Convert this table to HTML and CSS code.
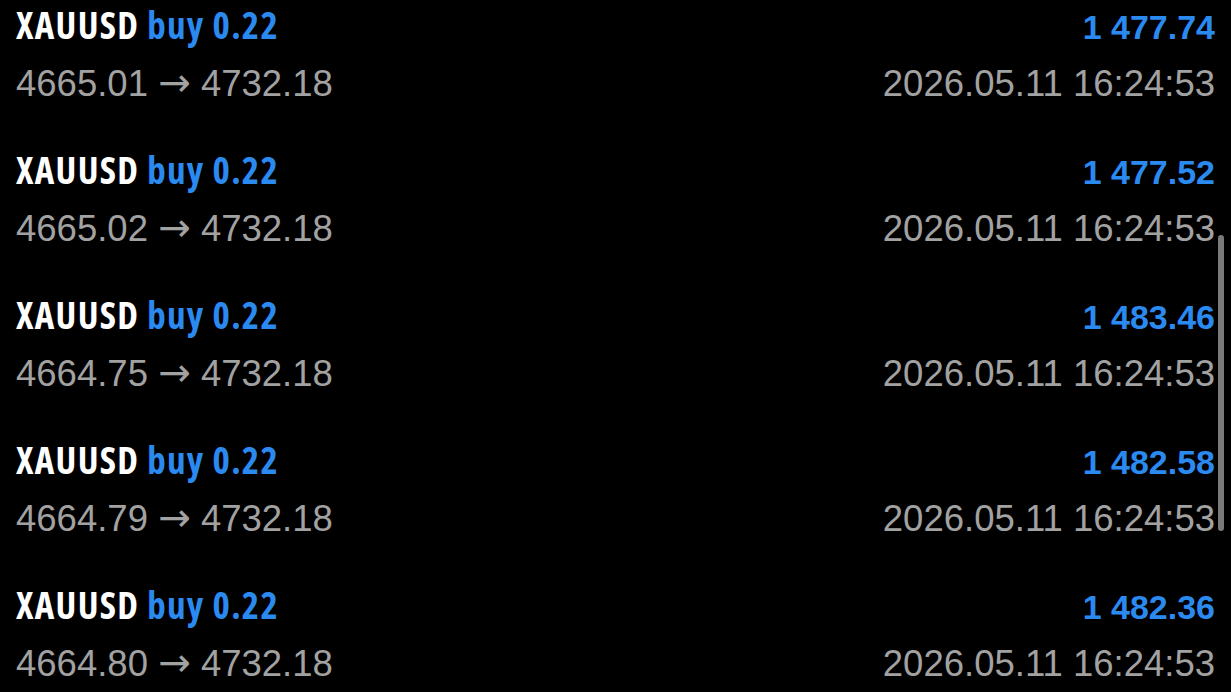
FILE: index.html
```html
<!DOCTYPE html>
<html>
<head>
<meta charset="utf-8">
<link rel="stylesheet" href="styles.css">
</head>
<body>
<div class="list">
  <div class="trade">
    <div class="line top"><span class="title"><span class="sym">XAUUSD</span> <span class="side">buy 0.22</span></span><span class="profit">1 477.74</span></div>
    <div class="line bottom"><span>4665.01 <span class="arrow">→</span> 4732.18</span><span>2026.05.11 16:24:53</span></div>
  </div>
  <div class="trade">
    <div class="line top"><span class="title"><span class="sym">XAUUSD</span> <span class="side">buy 0.22</span></span><span class="profit">1 477.52</span></div>
    <div class="line bottom"><span>4665.02 <span class="arrow">→</span> 4732.18</span><span>2026.05.11 16:24:53</span></div>
  </div>
  <div class="trade">
    <div class="line top"><span class="title"><span class="sym">XAUUSD</span> <span class="side">buy 0.22</span></span><span class="profit">1 483.46</span></div>
    <div class="line bottom"><span>4664.75 <span class="arrow">→</span> 4732.18</span><span>2026.05.11 16:24:53</span></div>
  </div>
  <div class="trade">
    <div class="line top"><span class="title"><span class="sym">XAUUSD</span> <span class="side">buy 0.22</span></span><span class="profit">1 482.58</span></div>
    <div class="line bottom"><span>4664.79 <span class="arrow">→</span> 4732.18</span><span>2026.05.11 16:24:53</span></div>
  </div>
  <div class="trade">
    <div class="line top"><span class="title"><span class="sym">XAUUSD</span> <span class="side">buy 0.22</span></span><span class="profit">1 482.36</span></div>
    <div class="line bottom"><span>4664.80 <span class="arrow">→</span> 4732.18</span><span>2026.05.11 16:24:53</span></div>
  </div>
  <div class="scrollbar"></div>
</div>
</body>
</html>
```

FILE: styles.css
```css
html, body {
  margin: 0;
  padding: 0;
  background: #000;
  height: 100%;
  overflow: hidden;
}
.list {
  position: relative;
  display: flex;
  flex-direction: column;
  padding: 1px 16px 0 16px;
  font-family: "Liberation Sans", Arial, sans-serif;
}
.trade {
  display: flex;
  flex-direction: column;
  padding-bottom: 30px;
}
.line {
  display: flex;
  justify-content: space-between;
  align-items: baseline;
  white-space: nowrap;
}
.top {
  height: 48px;
  line-height: 48px;
}
.title {
  font-family: "Open Sans", sans-serif;
  font-stretch: 75%;
  font-weight: 700;
  font-size: 37px;
  letter-spacing: 1.3px;
}
.sym {
  color: #fff;
}
.side {
  color: #2b8af0;
}
.profit {
  font-weight: bold;
  font-size: 34px;
  color: #2b8af0;
}
.bottom {
  height: 67px;
  line-height: 67px;
  font-size: 36.5px;
  color: #a2a2a2;
}
.arrow {
  font-family: "DejaVu Sans", sans-serif;
  font-size: 39px;
}
.scrollbar {
  position: absolute;
  left: 1218px;
  top: 235px;
  width: 6px;
  height: 296px;
  border-radius: 3px;
  background: #7a7a7a;
}
```
